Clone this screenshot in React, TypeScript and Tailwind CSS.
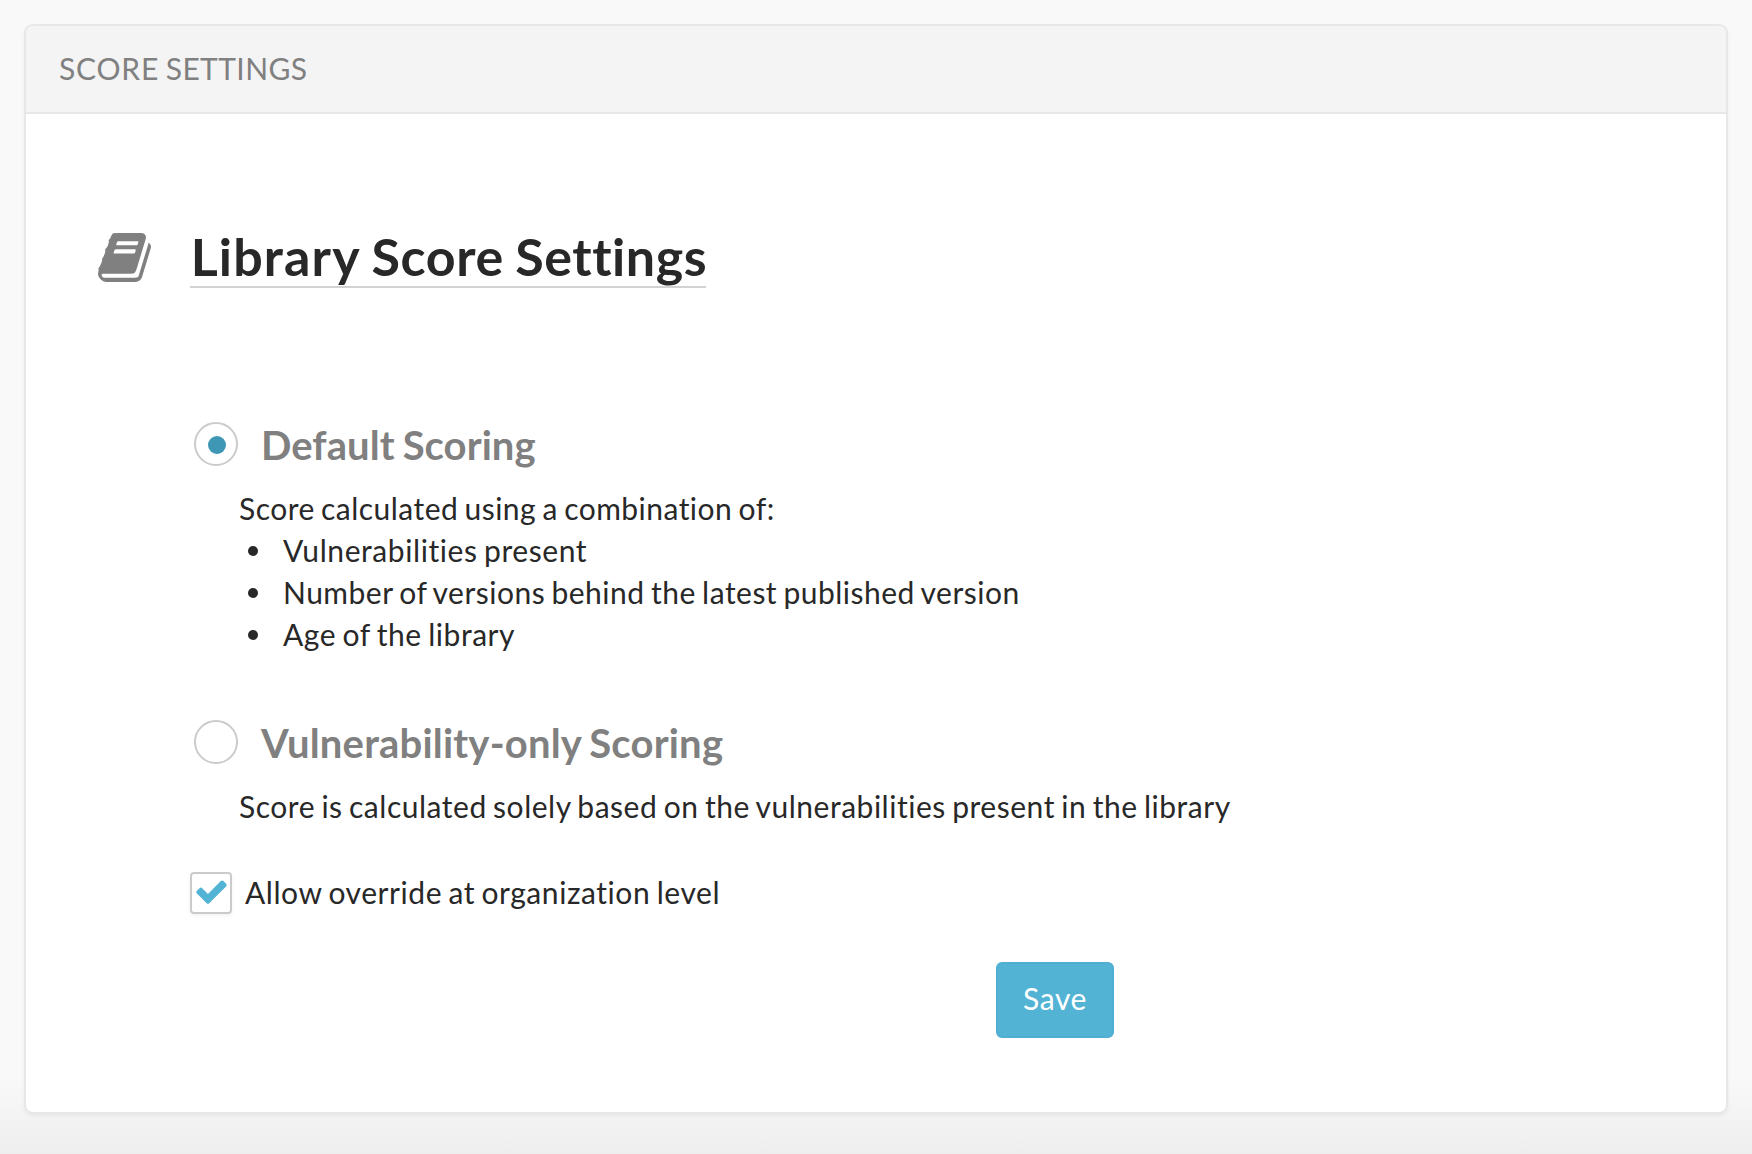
function BookIcon() {
  return (
    <svg viewBox="0 0 1792 1792" className="mt-[5px] size-[57px] shrink-0 fill-[#808080]">
      <path d="M1703 478q40 57 18 129l-275 906q-19 64-76.5 107.5t-122.500 43.5h-923q-77 0-148.500-53.500t-99.500-131.500q-24-67-2-127 0-4 3-27t4-37q1-8-3-21.500t-3-19.500q2-11 8-21t16.500-23.500 16.500-23.500q23-38 45-91.500t30-91.500q3-10 .5-30t-.5-28q3-11 17-28t17-23q21-36 42-92t25-90q1-9-2.500-32t.5-28q4-13 22-30.500t22-22.500q19-26 42.500-84.500t27.500-96.500q1-8-3-25.500t-2-26.500q2-8 9-18t18-23 17-21q8-12 16.500-30.500t15-35 16-36 19.500-32 26.500-23.500 36-11.500 47.500 5.500l-1 3q38-9 51-9h761q74 0 114 56t18 130l-274 906q-36 119-71.500 153.500t-128.500 34.500h-869q-27 0-38 15-11 16-1 43 24 70 144 70h923q29 0 56-15.500t35-41.500l300-987q7-22 5-57 38 15 59 43zm-1064 2q-4 13 2 22.500t20 9.500h608q13 0 25.500-9.500t16.500-22.500l21-64q4-13-2-22.500t-20-9.500h-608q-13 0-25.500 9.500t-16.500 22.500zm-83 256q-4 13 2 22.500t20 9.500h608q13 0 25.500-9.500t16.500-22.500l21-64q4-13-2-22.500t-20-9.500h-608q-13 0-25.500 9.500t-16.500 22.500z" />
    </svg>
  );
}

function CheckIcon() {
  return (
    <svg viewBox="0 0 1792 1792" className="mb-[3px] size-[35px] shrink-0 fill-[#52b3d4]">
      <path d="M1671 566q0 40-28 68l-724 724-136 136q-28 28-68 28t-68-28l-136-136-362-362q-28-28-28-68t28-68l136-136q28-28 68-28t68 28l294 295 656-657q28-28 68-28t68 28l136 136q28 28 28 68z" />
    </svg>
  );
}

function Radio({ on, label, tracking }: { on?: boolean; label: string; tracking: string }) {
  return (
    <label className="flex h-[44px] items-center">
      <span className="ml-[4px] flex size-[44px] shrink-0 items-center justify-center rounded-full border-2 border-[#cbcbcb] bg-white">
        {on && <span className="mt-px ml-px size-[18px] rounded-full bg-[#3e98b5]" />}
      </span>
      <span className={"mt-[2px] ml-[23px] text-[40px] leading-[44px] font-bold whitespace-nowrap text-[#808080] " + tracking}>{label}</span>
    </label>
  );
}

const factors = [
  { text: "Vulnerabilities present", tracking: "tracking-[0.58px]" },
  { text: "Number of versions behind the latest published version", tracking: "tracking-[0.49px]" },
  { text: "Age of the library", tracking: "tracking-[0.55px]" },
];

export default function App() {
  return (
    <div className="h-[1154px] w-[1752px] bg-[linear-gradient(to_bottom,#f9f9f9_1080px,#eeeeee_1154px)] px-6 pt-6 font-['Lato',sans-serif] text-[30px] leading-[42px] tracking-[0.5px] text-[#282828] antialiased [font-variant-ligatures:none] [word-spacing:-1.8px]">
      <section className="h-[1090px] w-[1704px] overflow-hidden rounded-[9px] border-2 border-[#e7e7e7] bg-white shadow-[0_2px_4px_rgba(0,0,0,0.05)]">
        <header className="flex h-[88px] items-center border-b-2 border-[#e7e7e7] bg-[#f4f4f4] pb-[3px] pl-[33px] text-[#808080]">
          <p>
            <span className="tracking-[0.8px]">SCORE </span>
            <span className="tracking-[0.4px]">SETTINGS</span>
          </p>
        </header>
        <div className="flex pt-[110px] pl-[70px]">
          <BookIcon />
          <div className="ml-[37px]">
            <h1 className="h-[64px] w-[516px] border-b-2 border-[#d2d2d2] pl-[0.7px] text-[52px] leading-[64px] font-bold whitespace-nowrap">
              <span className="tracking-[1.15px]">Library </span>
              <span className="tracking-[0.6px]">Score </span>
              <span className="tracking-[0.55px]">Settings</span>
            </h1>
            <div className="mt-[134px]">
              <Radio on label="Default Scoring" tracking="tracking-[0.07px]" />
              <div className="mt-[21px] ml-[49px]">
                <p className="tracking-[0.465px]">Score calculated using a combination of:</p>
                <ul>
                  {factors.map(({ text, tracking }) => (
                    <li key={text} className={"flex items-center " + tracking}>
                      <span className="mt-px mr-[25px] ml-[9px] size-[10px] rounded-full bg-[#282828]" />
                      {text}
                    </li>
                  ))}
                </ul>
              </div>
            </div>
            <div className="mt-[65px]">
              <Radio label="Vulnerability-only Scoring" tracking="tracking-[0.2px]" />
              <p className="mt-[21px] ml-[49px] tracking-[0.52px]">Score is calculated solely based on the vulnerabilities present in the library</p>
            </div>
            <label className="mt-[45px] flex h-[42px] items-center tracking-[0.56px]">
              <span className="flex size-[42px] shrink-0 items-center justify-center rounded-[4px] border-2 border-[#cbcbcb] shadow-[0_2px_4px_rgba(0,0,0,0.05)]">
                <CheckIcon />
              </span>
              <span className="ml-[13px] pb-[2px]">Allow override at organization level</span>
            </label>
            <button className="mt-[48px] ml-[806px] h-[76px] w-[118px] rounded-[6px] border-2 border-[#50aed2] bg-[#52b3d4] pb-[4px] tracking-[0.6px] text-white">Save</button>
          </div>
        </div>
      </section>
    </div>
  );
}
